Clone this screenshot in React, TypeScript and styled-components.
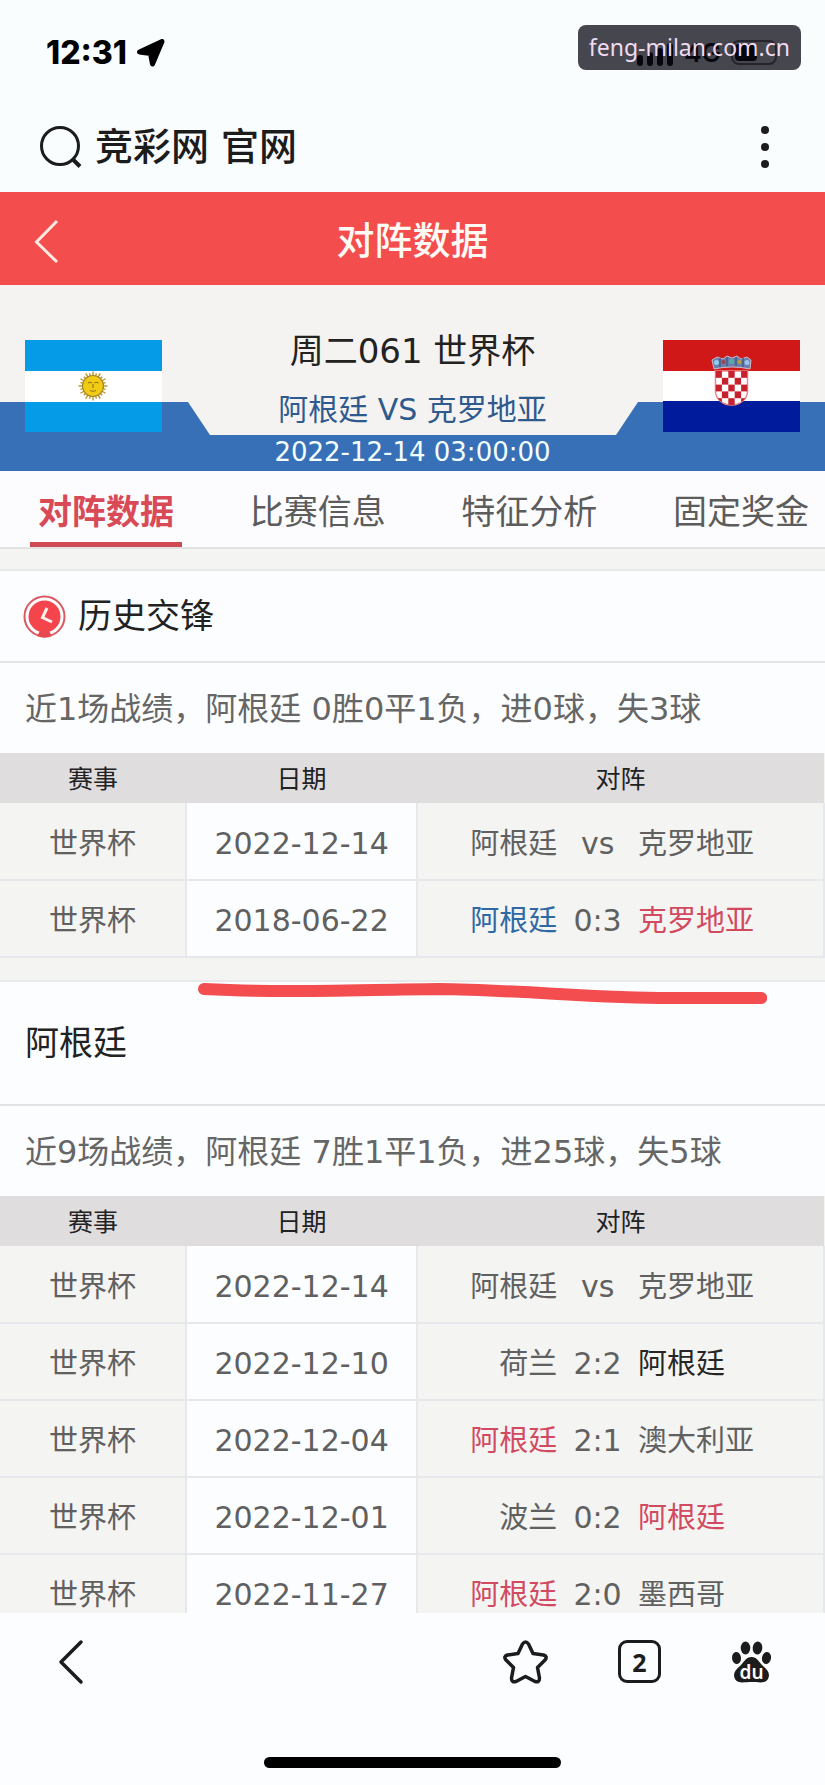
import React from "react";
import styled, { createGlobalStyle } from "styled-components";

const GlobalStyle = createGlobalStyle`
  *, *::before, *::after { box-sizing: border-box; }
  body {
    margin: 0;
    background: #fafdfe;
    font-family: "DejaVu Sans", "Noto Sans CJK SC", sans-serif;
    color: #222;
  }
  button { border: 0; padding: 0; background: none; color: inherit; font: inherit; cursor: pointer; }
  h1, h2, p { margin: 0; font-weight: 400; }
`;

const Screen = styled.div`
  position: relative;
  display: flex;
  flex-direction: column;
  height: 100vh;
  overflow: hidden;
`;

const StatusBar = styled.div`
  display: flex;
  align-items: center;
  justify-content: space-between;
  height: 106px;
  padding: 0 44px 0 46px;
  flex: none;
  color: #000;
`;

const StatusGroup = styled.div`
  display: flex;
  align-items: center;
  gap: 10px;
`;

const Clock = styled.time`
  font: 800 32px/40px Inter, sans-serif;
`;

const Network = styled.span`
  font: 600 26px/32px Inter, sans-serif;
`;

const Watermark = styled.div`
  position: absolute;
  top: 25px;
  right: 24px;
  padding: 0 11px;
  border-radius: 8px;
  background: rgba(10, 8, 20, 0.75);
  color: #efdcf0;
  font: 400 23px/45px "Noto Sans", sans-serif;
`;

const BrowserBar = styled.div`
  display: flex;
  align-items: center;
  height: 86px;
  padding: 0 46px 4px 39px;
  flex: none;
`;

const SearchButton = styled.button`
  display: flex;
  align-items: center;
  gap: 12px;
  color: #1c1c1c;
  font-size: 38px;
  font-weight: 500;
  line-height: 48px;
`;

const MoreButton = styled.button`
  display: flex;
  margin-left: auto;
`;

const TitleBar = styled.header`
  display: grid;
  grid-template-columns: 80px 1fr 80px;
  align-items: center;
  height: 93px;
  padding-top: 5px;
  flex: none;
  background: #f44d4d;
  color: #fffaf4;
`;

const BackButton = styled.button`
  display: flex;
  padding-left: 34px;
`;

const Title = styled.h1`
  && { font-weight: 500; }
  text-align: center;
  font-size: 38px;
  line-height: 48px;
`;

const Content = styled.main`
  flex: 1;
  min-height: 0;
  overflow: hidden;
  background: #f4f4f2;
`;

const Hero = styled.section`
  position: relative;
  display: flex;
  align-items: flex-start;
  justify-content: space-between;
  height: 186px;
  padding: 0 25px;
  background: #f4f3f1;

  &::before {
    content: "";
    position: absolute;
    inset: auto 0 0 0;
    height: 69px;
    background: #3870b8;
    clip-path: polygon(0 0, 188px 0, 210px 33px, calc(100% - 209px) 33px, calc(100% - 187px) 0, 100% 0, 100% 100%, 0 100%);
  }
`;

const Flag = styled.svg`
  position: relative;
  flex: none;
  width: 137px;
  height: 92px;
  margin-top: 55px;
`;

const MatchInfo = styled.div`
  position: relative;
  text-align: center;
  padding-top: 42px;
`;

const MatchName = styled.p`
  font-size: 34px;
  line-height: 48px;
  white-space: pre;
`;

const Teams = styled.p`
  margin-top: 14px;
  font-size: 30px;
  line-height: 42px;
  color: #2f5a8e;
`;

const KickOff = styled.p`
  margin-top: 4px;
  font-size: 26px;
  line-height: 34px;
  color: #f4ffff;
`;

const Tabs = styled.nav`
  display: flex;
  justify-content: space-between;
  height: 78px;
  padding: 0 8px 0 30px;
  background: #fcfcfe;
  border-bottom: 2px solid #e2e2e2;
`;

const Tab = styled.button<{ $active?: boolean }>`
  width: 152px;
  padding-top: 5px;
  padding-bottom: ${(p) => (p.$active ? 0 : 5)}px;
  border-bottom: ${(p) => (p.$active ? "5px solid #d04a54" : "0")};
  color: ${(p) => (p.$active ? "#d94a57" : "#5c5c5c")};
  font-size: 34px;
  font-weight: ${(p) => (p.$active ? 700 : 400)};
  white-space: nowrap;
`;

const Section = styled.section`
  position: relative;
  margin-top: 20px;
  border-top: 2px solid #e8eaea;

  & + & { margin-top: 22px; }
`;

const SectionHead = styled.div<{ $tall?: boolean }>`
  display: flex;
  align-items: center;
  gap: 12px;
  height: ${(p) => (p.$tall ? 124 : 92)}px;
  padding: 0 ${(p) => (p.$tall ? 25 : 23)}px;
  background: #fbfdfe;
  border-bottom: 2px solid #e4e4e4;
`;

const SectionTitle = styled.h2`
  font-size: 34px;
  line-height: 48px;
`;

const Summary = styled.p`
  height: 90px;
  padding: 0 25px;
  background: #fbfdfe;
  color: #666;
  font-size: 32px;
  line-height: 92px;
  white-space: nowrap;
`;

const Table = styled.table`
  width: 100%;
  table-layout: fixed;
  border-collapse: collapse;
`;

const HeadCell = styled.th<{ $width?: string }>`
  width: ${(p) => p.$width ?? "auto"};
  height: 50px;
  padding: 4px 0 0;
  background: #e0dddf;
  color: #222;
  font-size: 25px;
  font-weight: 400;
  line-height: 36px;
`;

const Cell = styled.td<{ $light?: boolean }>`
  height: 77px;
  padding: 5px 0 0;
  background: ${(p) => (p.$light ? "#fcfdff" : "#f4f4f2")};
  border: solid #e6e8ec;
  border-width: 0 2px 2px 0;
  color: #606060;
  font-size: ${(p) => (p.$light ? 30 : 29)}px;
  line-height: 40px;
  text-align: center;
`;

const Versus = styled.div`
  display: grid;
  grid-template-columns: 140fr 81fr 186fr;
`;

const Score = styled.span`
  font-size: 30px;
`;

type Tone = "plain" | "win" | "loss" | "draw";
const tones: Record<Tone, string> = {
  plain: "#606060",
  win: "#d24a60",
  loss: "#3068a4",
  draw: "#262626",
};

const Team = styled.span<{ $tone: Tone; $side: "left" | "right" }>`
  color: ${(p) => tones[p.$tone]};
  text-align: ${(p) => p.$side};
`;

const Stroke = styled.svg`
  position: absolute;
  top: -2px;
  left: 24%;
  width: 69%;
  height: 30px;
`;

const BottomBar = styled.footer`
  flex: none;
  height: 172px;
  background: #fbfdfe;
`;

const BottomActions = styled.div`
  display: flex;
  align-items: center;
  justify-content: space-between;
  height: 98px;
  padding: 0 52px 0 58px;
`;

const ActionGroup = styled.div`
  display: flex;
  gap: 70px;
`;

const IconButton = styled.button`
  display: flex;
`;

const TabCount = styled.button`
  width: 43px;
  height: 43px;
  border: 3px solid #1c1c1c;
  border-radius: 9px;
  color: #1c1c1c;
  font: 700 25px/34px "Noto Sans", sans-serif;
`;

const HomeIndicator = styled.div`
  width: 36%;
  height: 11px;
  margin: 46px auto 0;
  border-radius: 6px;
  background: #000;
`;

type Side = [string, Tone];
type Match = { date: string; home: Side; score: string; away: Side };

const history: Match[] = [
  { date: "2022-12-14", home: ["阿根廷", "plain"], score: "vs", away: ["克罗地亚", "plain"] },
  { date: "2018-06-22", home: ["阿根廷", "loss"], score: "0:3", away: ["克罗地亚", "win"] },
];

const recent: Match[] = [
  { date: "2022-12-14", home: ["阿根廷", "plain"], score: "vs", away: ["克罗地亚", "plain"] },
  { date: "2022-12-10", home: ["荷兰", "plain"], score: "2:2", away: ["阿根廷", "draw"] },
  { date: "2022-12-04", home: ["阿根廷", "win"], score: "2:1", away: ["澳大利亚", "plain"] },
  { date: "2022-12-01", home: ["波兰", "plain"], score: "0:2", away: ["阿根廷", "win"] },
  { date: "2022-11-27", home: ["阿根廷", "win"], score: "2:0", away: ["墨西哥", "plain"] },
];

function MatchTable({ rows }: { rows: Match[] }) {
  return (
    <Table>
      <thead>
        <tr>
          <HeadCell $width="22.6%">赛事</HeadCell>
          <HeadCell $width="28%">日期</HeadCell>
          <HeadCell>对阵</HeadCell>
        </tr>
      </thead>
      <tbody>
        {rows.map((m) => (
          <tr key={m.date}>
            <Cell>世界杯</Cell>
            <Cell $light>{m.date}</Cell>
            <Cell>
              <Versus>
                <Team $tone={m.home[1]} $side="right">{m.home[0]}</Team>
                <Score>{m.score}</Score>
                <Team $tone={m.away[1]} $side="left">{m.away[0]}</Team>
              </Versus>
            </Cell>
          </tr>
        ))}
      </tbody>
    </Table>
  );
}

function Argentina() {
  const rays = Array.from({ length: 24 }, (_, i) => i * 15);
  return (
    <Flag viewBox="0 0 137 92" role="img" aria-label="阿根廷">
      <rect width="137" height="92" fill="#069be6" />
      <rect y="31" width="137" height="31" fill="#fff" />
      <g stroke="#b8952a" strokeWidth="1.4">
        {rays.map((a) => (
          <line key={a} x1="68" y1="36" x2="68" y2={a % 30 ? 33 : 31.5} transform={`rotate(${a} 68 46)`} />
        ))}
      </g>
      <circle cx="68" cy="46" r="10.5" fill="#f0cc14" stroke="#a9862a" strokeWidth="1.2" />
      <path d="M63 43q2-1.500 4 0M69.500 43q2-1.500 4 0M68 44v4M65 50.500q3 1.500 6 0" fill="none" stroke="#9a7420" strokeWidth="1.2" />
    </Flag>
  );
}

function Croatia() {
  const cells: React.ReactElement[] = [];
  for (let r = 0; r < 5; r++)
    for (let c = 0; c < 5; c++)
      if ((r + c) % 2 === 0)
        cells.push(<rect key={`${r}-${c}`} x={52.5 + c * 6.4} y={31 + r * 6.8} width="6.4" height="6.8" fill="#c8202c" />);
  return (
    <Flag viewBox="0 0 137 92" role="img" aria-label="克罗地亚">
      <defs>
        <clipPath id="shield">
          <path d="M52.500 31h32v20c0 8-7 14-16 14s-16-6-16-14z" />
        </clipPath>
      </defs>
      <rect width="137" height="31" fill="#d01818" />
      <rect y="31" width="137" height="31" fill="#fff" />
      <rect y="61" width="137" height="31" fill="#001c9c" />
      <path d="M52.500 31h32v20c0 8-7 14-16 14s-16-6-16-14z" fill="#fff" stroke="#e88" strokeWidth="1.500" />
      <g clipPath="url(#shield)">{cells}</g>
      <path d="M51 29l-2-9 5-3 6 2 4-3 5 2 5-2 4 3 6-2 4 3-1 9q-18-4-36 0z" fill="#6d7fae" stroke="#c9b8c8" strokeWidth="1" />
      <path d="M57 18v9M64 17v9M73 17v9M80 18v9" stroke="#3f5f8a" strokeWidth="1.500" />
      <circle cx="53.500" cy="22.500" r="2.500" fill="#8fd0f0" />
      <circle cx="60.500" cy="22" r="2" fill="#a04050" />
      <circle cx="68.500" cy="21.500" r="2.500" fill="#4fb0a8" />
      <circle cx="76.500" cy="22" r="2" fill="#b8a040" />
      <circle cx="84" cy="22.500" r="2.500" fill="#9ac4ec" />
    </Flag>
  );
}

export default function App() {
  return (
    <>
      <GlobalStyle />
      <Screen>
        <StatusBar>
          <StatusGroup>
            <Clock>12:31</Clock>
            <svg width="28" height="28" viewBox="0 0 28 28" aria-hidden="true">
              <path d="M2.500 13 25 2.500 15.500 25 13.500 14.500z" fill="#000" stroke="#000" strokeWidth="5" strokeLinejoin="round" />
            </svg>
          </StatusGroup>
          <StatusGroup>
            <svg width="38" height="28" viewBox="0 0 38 28" aria-hidden="true">
              <path d="M4 24v-5M14 24v-8M24 24V12M34 24V7" stroke="#000" strokeWidth="6" strokeLinecap="round" />
            </svg>
            <Network>4G</Network>
            <svg width="50" height="26" viewBox="0 0 50 26" aria-hidden="true">
              <rect x="1" y="1" width="44" height="23" rx="7" fill="none" stroke="#777" strokeWidth="2" />
              <rect x="4" y="4" width="22" height="17" rx="4" fill="#000" />
              <path d="M47 9q3 3.500 0 7z" fill="#777" />
            </svg>
          </StatusGroup>
        </StatusBar>

        <BrowserBar>
          <SearchButton>
            <svg width="44" height="44" viewBox="0 0 44 44" fill="none" stroke="#1c1c1c" strokeWidth="3" aria-hidden="true">
              <circle cx="21" cy="21" r="18.500" />
              <path d="M33 33.500 41 41.500" strokeWidth="4" />
            </svg>
            竞彩网 官网
          </SearchButton>
          <MoreButton aria-label="更多">
            <svg width="28" height="44" viewBox="0 0 28 44" fill="#1c1c1c">
              <circle cx="14" cy="5" r="4" />
              <circle cx="14" cy="22" r="4" />
              <circle cx="14" cy="39" r="4" />
            </svg>
          </MoreButton>
        </BrowserBar>

        <TitleBar>
          <BackButton aria-label="返回">
            <svg width="26" height="44" viewBox="0 0 26 44" fill="none" stroke="#ffe9e0" strokeWidth="3">
              <path d="M23 2 2.500 23 23 43" />
            </svg>
          </BackButton>
          <Title>对阵数据</Title>
        </TitleBar>

        <Content>
          <Hero>
            <Argentina />
            <MatchInfo>
              <MatchName>周二061 世界杯</MatchName>
              <Teams>阿根廷 VS 克罗地亚</Teams>
              <KickOff>2022-12-14 03:00:00</KickOff>
            </MatchInfo>
            <Croatia />
          </Hero>

          <Tabs>
            <Tab $active>对阵数据</Tab>
            <Tab>比赛信息</Tab>
            <Tab>特征分析</Tab>
            <Tab>固定奖金</Tab>
          </Tabs>

          <Section>
            <SectionHead>
              <svg width="43" height="43" viewBox="0 0 43 43" aria-hidden="true">
                <circle cx="21.500" cy="21.500" r="20" fill="#fff" stroke="#dc5862" strokeWidth="2" />
                <circle cx="21.500" cy="21.500" r="16" fill="#f4444c" />
                <path d="M17 36h9l3 5q-7 3-15 0z" fill="#e84850" />
                <path d="M24 13 19.500 22.500 29 27" fill="none" stroke="#fff0ea" strokeWidth="3" />
              </svg>
              <SectionTitle>历史交锋</SectionTitle>
            </SectionHead>
            <Summary>近1场战绩，阿根廷 0胜0平1负，进0球，失3球</Summary>
            <MatchTable rows={history} />
          </Section>

          <Section>
            <SectionHead $tall>
              <SectionTitle>阿根廷</SectionTitle>
            </SectionHead>
            <Summary>近9场战绩，阿根廷 7胜1平1负，进25球，失5球</Summary>
            <MatchTable rows={recent} />
            <Stroke viewBox="0 0 569 30" preserveAspectRatio="none" aria-hidden="true">
              <path d="M6 9C80 13 150 10 240 9C320 10 400 18 470 18H563" fill="none" stroke="#f44d50" strokeWidth="12" strokeLinecap="round" />
            </Stroke>
          </Section>
        </Content>

        <BottomBar>
          <BottomActions>
            <IconButton aria-label="后退">
              <svg width="26" height="46" viewBox="0 0 26 46" fill="none" stroke="#1c1c1c" strokeWidth="3.500" strokeLinecap="round" strokeLinejoin="round">
                <path d="M23 3 3 23 23 43" />
              </svg>
            </IconButton>
            <ActionGroup>
              <IconButton aria-label="收藏">
                <svg width="45" height="44" viewBox="0 0 45 44" fill="none" stroke="#1c1c1c" strokeWidth="3.500" strokeLinejoin="round">
                  <path d="M19.500 4Q22.500 0 25.500 4L30 13.500 40.500 15Q45 16.500 42 20L34.500 27.500 36.500 38Q36.500 43 32 41.500L22.500 36.500 13 41.500Q8.500 43 8.500 38L10.500 27.500 3 20Q0 16.500 4.500 15L15 13.500z" />
                </svg>
              </IconButton>
              <TabCount aria-label="标签页">2</TabCount>
              <IconButton aria-label="百度">
                <svg width="42" height="44" viewBox="0 0 42 44" fill="#1c1c1c">
                  <ellipse cx="5.500" cy="18" rx="4.500" ry="6" transform="rotate(-8 5.500 18)" />
                  <ellipse cx="14.500" cy="8" rx="4.800" ry="6.500" />
                  <ellipse cx="26.500" cy="8" rx="4.800" ry="6.500" transform="rotate(6 26.500 8)" />
                  <ellipse cx="35.500" cy="18" rx="4.500" ry="6" transform="rotate(10 35.500 18)" />
                  <path d="M20.500 17C26 17 28 22 32 26C37 30 39.500 34 37 39C34 44 28 42 20.500 42S7 44 4 39C1.500 34 4 30 9 26C13 22 15 17 20.500 17z" />
                  <text x="20.500" y="39" textAnchor="middle" fill="#fff" fontFamily="Noto Sans, sans-serif" fontSize="19" fontWeight="600">du</text>
                </svg>
              </IconButton>
            </ActionGroup>
          </BottomActions>
          <HomeIndicator />
        </BottomBar>

        <Watermark>feng-milan.com.cn</Watermark>
      </Screen>
    </>
  );
}
